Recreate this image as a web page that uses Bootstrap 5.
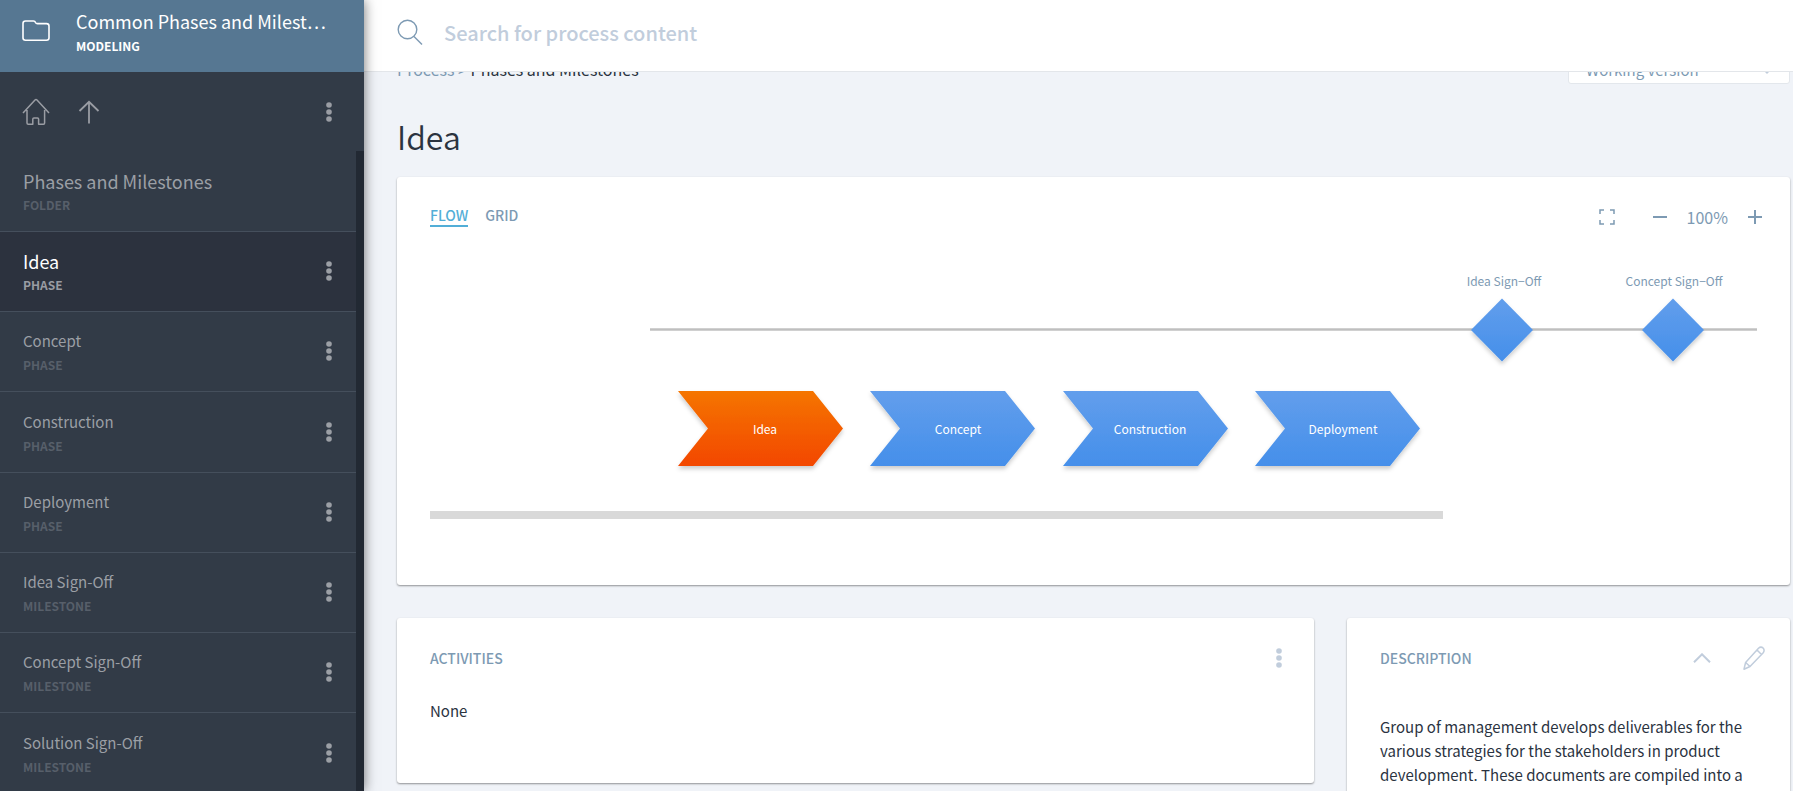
<!DOCTYPE html>
<html lang="en">
<head>
<meta charset="utf-8">
<meta name="viewport" content="width=device-width, initial-scale=1">
<title>Common Phases and Milestones</title>
<link href="https://cdn.jsdelivr.net/npm/bootstrap@5.3.0/dist/css/bootstrap.min.css" rel="stylesheet">
<style>
  body { font-family: "Noto Sans CJK KR", "Noto Sans", sans-serif; background: #f0f3f8; color: #2b333f; font-size: 15px; line-height: 24px; }
  a { text-decoration: none; }
  .icon-btn { background: none; border: 0; padding: 0; line-height: 0; color: inherit; }
  .side { width: 364px; background: #323b47; z-index: 3; box-shadow: 0 0 12px rgba(0,0,0,.55); }
  .side-head { height: 72px; background: #567792; color: #fff; padding: 0 36px 10px 22px; gap: 26px; }
  .title-lg { font-size: 18px; line-height: 24px; }
  .kind { font-size: 12px; line-height: 16px; font-weight: 700; margin-top: 5px; }
  .side-tools { height: 79px; color: #9a9da4; padding: 0 32px 0 22px; gap: 28px; }
  .side-list { border-right: 8px solid #222933; }
  .side-item { height: 80px; border-bottom: 1px solid #454f5c; padding: 0 24px 1px 23px; color: #9b9fa5; }
  .side-item:first-child, .side-item:nth-child(4n) { height: 81px; }
  .side-item .kind { color: #575f6a; margin-top: 4px; }
  .side-item.current { background: #2c323e; }
  .side-item.current a { color: #fff; }
  .side-item.current .kind { color: #999ca3; }
  .side-item a { color: inherit; display: block; }
  .topbar { height: 72px; border-bottom: 1px solid #e3e6ea; padding: 0 33px; gap: 21px; z-index: 2; color: #7d9ab3; }
  .search { border: 0; outline: 0; font-size: 20px; line-height: 28px; color: #567792; font-weight: 500; padding: 0 0 6px; }
  .search::placeholder { color: #c1cddc; opacity: 1; }
  .scrolled { margin-top: -18px; padding: 0 3px 0 33px; }
  .crumb { height: 30px; padding-top: 3px; color: #7d9ab3; font-size: 16px; }
  .crumb a { color: #7d9ab3; }
  .crumb span { color: #2b333f; }
  .version { width: 222px; height: 30px; border: 1px solid #e3e7ec; border-radius: 3px; background: #fff; color: #7d9ab3; padding: 2px 17px 0; font-size: 15px; line-height: 24px; appearance: none; display: block; }
  .version-wrap svg { right: 18px; top: 7px; }
  .page-title { font-size: 32px; line-height: 40px; font-weight: 350; margin: 32px 0 21px; }
  .panel { background: #fff; border-radius: 3px; box-shadow: 0 1px 2px rgba(0,0,0,.4); }
  .cap { font-size: 14px; line-height: 20px; font-weight: 500; color: #7d9ab3; margin: 0; }
  .tab { border-bottom: 2px solid transparent; }
  .tab.on { color: #52aed7; border-color: #52aed7; }
  .tabs { gap: 17px; }
  .flow-head { padding: 28px 28px 0 33px; color: #7d9ab3; }
  .fit { margin-right: 38px; }
  .zoom-level { font-size: 16px; margin: 0 20px; }
  .flow { padding: 0 33px; height: 356px; overflow: hidden; }
  .flow text { font-size: 12px; text-anchor: middle; }
  .lower { display: grid; grid-template-columns: minmax(0, 917px) minmax(300px, 443px); justify-content: space-between; align-items: start; margin-top: 33px; }
  .panel-pad { padding: 28px 25px 0 33px; }
  .panel-pad header { height: 24px; }
  .panel-pad p { margin: 29px 0 0; }
  .panel-pad .desc { margin: 45px 8px 0 0; }
  .soft { color: #c1cddc; }
  .acts { height: 165px; padding-right: 32px; }
  .about { min-height: 260px; }
  .fold { margin-right: 32px; }
</style>
</head>
<body>
<svg width="0" height="0" class="position-absolute" aria-hidden="true">
  <symbol id="dots" viewBox="0 0 6 20"><g fill="currentColor"><circle cx="3" cy="3" r="2.8"/><circle cx="3" cy="10" r="2.8"/><circle cx="3" cy="17" r="2.8"/></g></symbol>
</svg>
<div class="d-flex vh-100 overflow-hidden">
  <aside class="side d-flex flex-column flex-shrink-0">
    <header class="side-head d-flex align-items-center flex-shrink-0">
      <svg width="28" height="22" viewBox="0 0 28 22" class="flex-shrink-0" fill="none" stroke="#fff" stroke-width="1.6"><path d="M1 18V3.500Q1 1 3.500 1H11.500Q13 1 13.500 2.500Q14 3.600 15.500 3.600H24.500Q27 3.600 27 6V18Q27 20.200 24.500 20.200H3.500Q1 20.200 1 18Z"/></svg>
      <div>
        <div class="title-lg text-nowrap">Common Phases and Milest…</div>
        <div class="kind">MODELING</div>
      </div>
    </header>
    <div class="side-tools d-flex align-items-center flex-shrink-0">
      <button class="icon-btn" aria-label="Home"><svg width="28" height="28" viewBox="0 0 28 28" fill="none" stroke="currentColor" stroke-width="1.500" stroke-linejoin="round"><path d="M1 15 13 2Q14 1 15 2L27 15M5 12V25Q5 26.200 6.200 26.200H10.800V21Q10.800 20 12 20H15.500Q16.600 20 16.600 21V26.200H21.500Q22.600 26.200 22.600 25V12"/></svg></button>
      <button class="icon-btn" aria-label="Up"><svg width="22" height="24" viewBox="0 0 22 24" fill="none" stroke="currentColor" stroke-width="1.800"><path d="M11 23.500V2M1.500 11 11 1.800 20.500 11"/></svg></button>
      <button class="icon-btn ms-auto" aria-label="Menu"><svg width="6" height="20"><use href="#dots"/></svg></button>
    </div>
    <nav class="side-list flex-grow-1 overflow-hidden" aria-label="Elements">
      <div class="side-item d-flex align-items-center justify-content-between"><div><a href="#" class="title-lg">Phases and Milestones</a><div class="kind">FOLDER</div></div></div>
      <div class="side-item current d-flex align-items-center justify-content-between"><div><a href="#" class="title-lg">Idea</a><div class="kind">PHASE</div></div><button class="icon-btn" aria-label="Menu"><svg width="6" height="20"><use href="#dots"/></svg></button></div>
      <div class="side-item d-flex align-items-center justify-content-between"><div><a href="#">Concept</a><div class="kind">PHASE</div></div><button class="icon-btn" aria-label="Menu"><svg width="6" height="20"><use href="#dots"/></svg></button></div>
      <div class="side-item d-flex align-items-center justify-content-between"><div><a href="#">Construction</a><div class="kind">PHASE</div></div><button class="icon-btn" aria-label="Menu"><svg width="6" height="20"><use href="#dots"/></svg></button></div>
      <div class="side-item d-flex align-items-center justify-content-between"><div><a href="#">Deployment</a><div class="kind">PHASE</div></div><button class="icon-btn" aria-label="Menu"><svg width="6" height="20"><use href="#dots"/></svg></button></div>
      <div class="side-item d-flex align-items-center justify-content-between"><div><a href="#">Idea Sign-Off</a><div class="kind">MILESTONE</div></div><button class="icon-btn" aria-label="Menu"><svg width="6" height="20"><use href="#dots"/></svg></button></div>
      <div class="side-item d-flex align-items-center justify-content-between"><div><a href="#">Concept Sign-Off</a><div class="kind">MILESTONE</div></div><button class="icon-btn" aria-label="Menu"><svg width="6" height="20"><use href="#dots"/></svg></button></div>
      <div class="side-item d-flex align-items-center justify-content-between"><div><a href="#">Solution Sign-Off</a><div class="kind">MILESTONE</div></div><button class="icon-btn" aria-label="Menu"><svg width="6" height="20"><use href="#dots"/></svg></button></div>
    </nav>
  </aside>

  <main class="flex-grow-1 overflow-hidden">
    <div class="topbar position-relative bg-white d-flex align-items-center">
      <svg width="26" height="26" viewBox="0 0 26 26" fill="none" stroke="currentColor" stroke-width="1.400" class="flex-shrink-0 mb-2"><circle cx="10.500" cy="10.500" r="9.300"/><path d="M17 17.500 25 25.500"/></svg>
      <input type="search" class="search flex-grow-1" placeholder="Search for process content" aria-label="Search for process content">
    </div>
    <div class="scrolled">
      <div class="d-flex justify-content-between">
        <div class="crumb"><a href="#">Process</a> &gt; <span>Phases and Milestones</span></div>
        <div class="version-wrap position-relative">
          <select class="version" aria-label="Version"><option>Working version</option></select>
          <svg width="10" height="14" viewBox="0 0 10 14" class="position-absolute" fill="#c1cddc"><path d="M1 5 5 1 9 5ZM1 9 5 13 9 9Z"/></svg>
        </div>
      </div>
      <h1 class="page-title">Idea</h1>

      <section class="panel">
        <div class="flow-head d-flex align-items-start justify-content-between">
          <div class="tabs d-flex"><a href="#" class="cap tab on">FLOW</a><a href="#" class="cap tab">GRID</a></div>
          <div class="d-flex align-items-center">
            <button class="icon-btn fit" aria-label="Full screen"><svg width="16" height="16" viewBox="0 0 16 16" fill="none" stroke="currentColor" stroke-width="1.500"><path d="M1 5V1H5M11 1H15V5M15 11V15H11M5 15H1V11"/></svg></button>
            <button class="icon-btn" aria-label="Zoom out"><svg width="14" height="14" viewBox="0 0 14 14" stroke="currentColor" stroke-width="2"><path d="M0 7H14"/></svg></button>
            <span class="zoom-level">100%</span>
            <button class="icon-btn" aria-label="Zoom in"><svg width="14" height="14" viewBox="0 0 14 14" stroke="currentColor" stroke-width="2"><path d="M0 7H14M7 0V14"/></svg></button>
          </div>
        </div>
        <div class="flow">
          <svg width="1340" height="330" viewBox="430 229 1340 330" class="d-block">
            <defs>
              <linearGradient id="blue" x2="0" y2="1"><stop stop-color="#629eec"/><stop offset="1" stop-color="#458fea"/></linearGradient>
              <linearGradient id="orange" x2="0" y2="1"><stop stop-color="#f57500"/><stop offset="1" stop-color="#f34700"/></linearGradient>
              <filter id="lift" x="-10%" y="-10%" width="120%" height="130%"><feDropShadow dx="0" dy="3" stdDeviation="2" flood-opacity=".2"/></filter>
              <path id="arrow" d="M0 0H135L165 37.500 135 75H0L30 37.500Z" filter="url(#lift)"/>
              <path id="diamond" d="M0-31.500 31 0 0 31.500-31 0Z" filter="url(#lift)"/>
            </defs>
            <path d="M650 329.500H1757" stroke="#d0d0d0" stroke-width="3"/><path d="M650 329.500H1757" stroke="#bfbfbf"/>
            <rect x="430" y="511" width="1013" height="8" fill="#d9d9d9"/>
            <g fill="url(#blue)">
              <use href="#diamond" x="1502" y="330"/><use href="#diamond" x="1673" y="330"/>
              <use href="#arrow" x="870" y="391"/><use href="#arrow" x="1063" y="391"/><use href="#arrow" x="1255" y="391"/>
            </g>
            <use href="#arrow" x="678" y="391" fill="url(#orange)"/>
            <g fill="#7d9ab3"><text x="1504" y="286">Idea Sign−Off</text><text x="1674" y="286">Concept Sign−Off</text></g>
            <g fill="#fff"><text x="765" y="434">Idea</text><text x="958" y="434">Concept</text><text x="1150" y="434">Construction</text><text x="1343" y="434">Deployment</text></g>
          </svg>
        </div>
      </section>

      <div class="lower">
        <section class="panel panel-pad acts">
          <header class="d-flex align-items-center justify-content-between">
            <h2 class="cap">ACTIVITIES</h2>
            <button class="icon-btn soft" aria-label="Menu"><svg width="6" height="20"><use href="#dots"/></svg></button>
          </header>
          <p>None</p>
        </section>
        <section class="panel panel-pad about">
          <header class="d-flex align-items-center">
            <h2 class="cap me-auto">DESCRIPTION</h2>
            <button class="icon-btn soft fold" aria-label="Collapse"><svg width="18" height="10" viewBox="0 0 18 10" fill="none" stroke="currentColor" stroke-width="2"><path d="M1 9.300 9 1.300 17 9.300"/></svg></button>
            <button class="icon-btn soft" aria-label="Edit"><svg width="22" height="24" viewBox="0 0 22 24" fill="none" stroke="currentColor" stroke-width="1.500" stroke-linejoin="round"><path d="M1 23.200 2.600 16.500 15.500 2.300Q18 0 20.300 2.300 22 4.500 20 7L7 20.500ZM14 4 18.500 8.500M2.600 16.500 7 20.500"/></svg></button>
          </header>
          <p class="desc">Group of management develops deliverables for the various strategies for the stakeholders in product development. These documents are compiled into a</p>
        </section>
      </div>
    </div>
  </main>
</div>
<script src="https://cdn.jsdelivr.net/npm/bootstrap@5.3.0/dist/js/bootstrap.bundle.min.js"></script>
</body>
</html>
